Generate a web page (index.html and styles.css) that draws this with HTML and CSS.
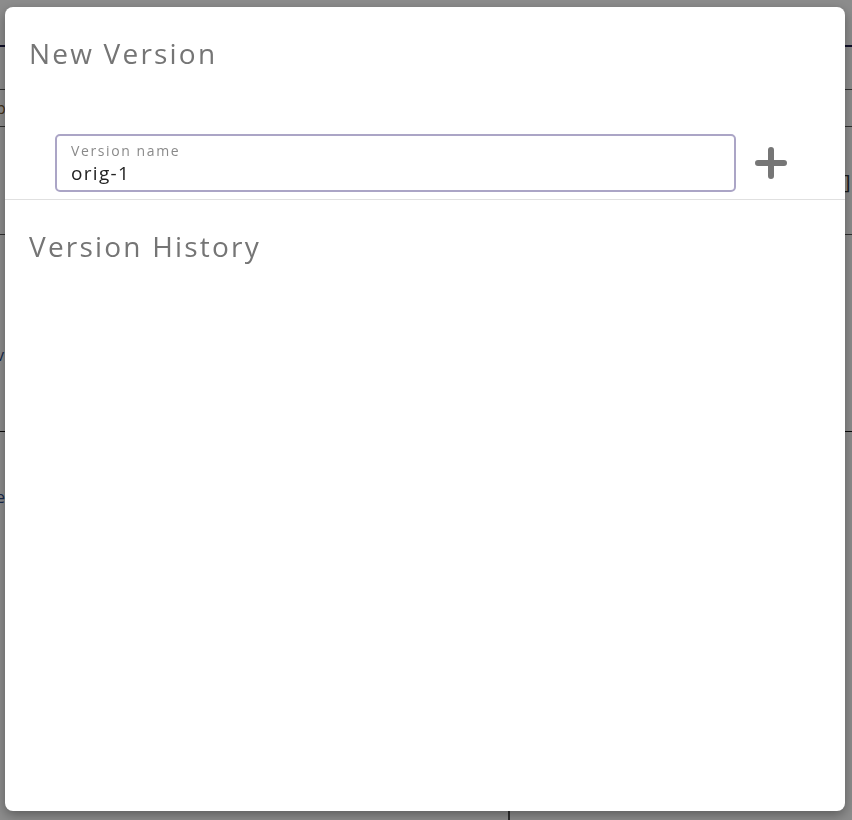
FILE: index.html
```html
<!DOCTYPE html>
<html>
<head>
<meta charset="utf-8">
<link rel="stylesheet" href="styles.css">
</head>
<body>
<div class="page">
  <div class="page-header"></div>
  <div class="page-row row-a"><span class="page-text">p</span></div>
  <div class="page-row row-b"></div>
  <div class="page-row row-c"><span class="page-text">v</span></div>
  <div class="page-row row-d"><span class="page-text">e</span></div>
  <div class="page-bracket">]</div>
  <div class="page-vline"></div>
</div>
<div class="backdrop"></div>
<div class="modal">
  <div class="section">
    <h2 class="title">New Version</h2>
    <div class="form-row">
      <div class="field">
        <label class="field-label">Version name</label>
        <div class="field-value">orig-1</div>
      </div>
      <button class="add-btn" aria-label="Add">
        <svg width="32" height="32" viewBox="0 0 32 32"><path d="M16 3v26M3 16h26" stroke="#767676" stroke-width="6" stroke-linecap="round"/></svg>
      </button>
    </div>
  </div>
  <div class="divider"></div>
  <div class="section history">
    <h2 class="title">Version History</h2>
  </div>
</div>
</body>
</html>
```
FILE: styles.css
```css
html, body {
  margin: 0;
  padding: 0;
  width: 852px;
  height: 820px;
  overflow: hidden;
  font-family: "Open Sans", "Liberation Sans", sans-serif;
}
.page {
  position: relative;
  width: 852px;
  height: 820px;
  background: #ffffff;
}
.page-header {
  height: 45px;
  border-bottom: 2px solid #1e1a4a;
}
.page-row {
  position: relative;
  border-bottom: 1px solid #555;
}
.row-a { height: 36px; border-top: 1px solid #555; margin-top: 42px; }
.row-b { height: 107px; }
.row-c { height: 196px; border-bottom-color: #111; }
.row-d { height: 120px; border-bottom: none; }
.page-text {
  position: absolute;
  left: -4px;
  font-size: 16px;
  line-height: 20px;
  color: #2a4a8a;
}
.row-a .page-text { top: 8px; color: #7a5a30; }
.row-c .page-text { top: 110px; }
.row-d .page-text { top: 55px; }
.page-bracket {
  position: absolute;
  left: 844px;
  top: 168px;
  font-size: 20px;
  color: #333;
}
.page-vline {
  position: absolute;
  left: 508px;
  top: 800px;
  width: 2px;
  height: 20px;
  background: #555;
}
.backdrop {
  position: fixed;
  inset: 0;
  background: rgba(0, 0, 0, 0.45);
}
.modal {
  position: fixed;
  left: 5px;
  top: 7px;
  width: 840px;
  height: 804px;
  background: #fff;
  border-radius: 8px;
  box-shadow: 0 4px 12px rgba(0, 0, 0, 0.35);
  overflow: hidden;
}
.section {
  padding: 26px 24px 0 24px;
}
.title {
  margin: 0;
  font-size: 28px;
  line-height: 40px;
  font-weight: 400;
  color: #757575;
  letter-spacing: 2.2px;
}
.form-row {
  display: flex;
  align-items: center;
  gap: 19px;
  margin-top: 61px;
  margin-left: 26px;
  padding-bottom: 7px;
}
.field {
  box-sizing: border-box;
  width: 681px;
  height: 58px;
  border: 2px solid #aba5c6;
  border-radius: 5px;
  padding: 6px 14px 0 14px;
}
.field-label {
  display: block;
  font-size: 14px;
  line-height: 18px;
  color: #8a8a8a;
  letter-spacing: 1.6px;
}
.field-value {
  font-size: 19px;
  line-height: 26px;
  color: #222;
  letter-spacing: 1.3px;
}
.add-btn {
  border: none;
  background: none;
  padding: 0;
  width: 32px;
  height: 32px;
  display: flex;
}
.divider {
  height: 1px;
  background: #e0e0e0;
}
.history {
  padding-top: 26px;
}
```
